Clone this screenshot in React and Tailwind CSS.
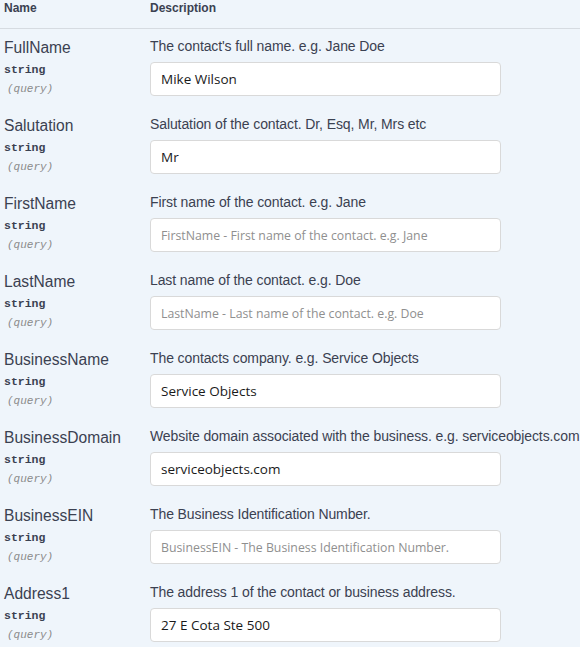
import React from 'react';

const params = [
  { name: "FullName", desc: "The contact's full name. e.g. Jane Doe", value: "Mike Wilson" },
  { name: "Salutation", desc: "Salutation of the contact. Dr, Esq, Mr, Mrs etc", value: "Mr" },
  { name: "FirstName", desc: "First name of the contact. e.g. Jane", placeholder: "FirstName - First name of the contact. e.g. Jane" },
  { name: "LastName", desc: "Last name of the contact. e.g. Doe", placeholder: "LastName - Last name of the contact. e.g. Doe" },
  { name: "BusinessName", desc: "The contacts company. e.g. Service Objects", value: "Service Objects" },
  { name: "BusinessDomain", desc: "Website domain associated with the business. e.g. serviceobjects.com", value: "serviceobjects.com" },
  { name: "BusinessEIN", desc: "The Business Identification Number.", placeholder: "BusinessEIN - The Business Identification Number." },
  { name: "Address1", desc: "The address 1 of the contact or business address.", value: "27 E Cota Ste 500" },
];

const App = () => {
  return (
    <div className="w-[580px] h-[647px] overflow-hidden bg-[#eff5fb] text-[#3b4151] font-['Liberation_Sans',Arial,sans-serif]">
      {/* Table header */}
      <div className="flex h-[29px] border-b border-[#d6dbe1] text-[12px] font-bold leading-[16px]">
        <div className="w-[150px] shrink-0 pl-[4px]">Name</div>
        <div>Description</div>
      </div>

      {/* Parameter rows */}
      {params.map((p) => (
        <div key={p.name} className="flex h-[78px] pt-[8px]">
          <div className="w-[150px] shrink-0 pl-[4px]">
            <div className="text-[15.6px] leading-[22px]">{p.name}</div>
            <div className="mt-[1px] text-[11.5px] font-bold leading-[20px] font-['Liberation_Mono',monospace]">string</div>
            <div className="pl-[3px] text-[11px] italic leading-[18px] text-[#8a8a8a] font-['Liberation_Mono',monospace]">(query)</div>
          </div>
          <div className="min-w-0 flex-1">
            <div className="text-[14px] leading-[18px] whitespace-nowrap tracking-[-0.1px]">{p.desc}</div>
            <input
              readOnly
              defaultValue={p.value || ""}
              placeholder={p.placeholder || ""}
              className="mt-[7px] block w-[351px] h-[34px] px-[10px] bg-white border border-[#d9d9d9] rounded-[4px] text-[13.5px] font-medium text-[#1a1a1a] placeholder:text-[12.3px] placeholder:font-normal placeholder:text-[#8f8f8f] font-['Open_Sans',sans-serif] outline-none"
            />
          </div>
        </div>
      ))}
    </div>
  );
};

export default App;
